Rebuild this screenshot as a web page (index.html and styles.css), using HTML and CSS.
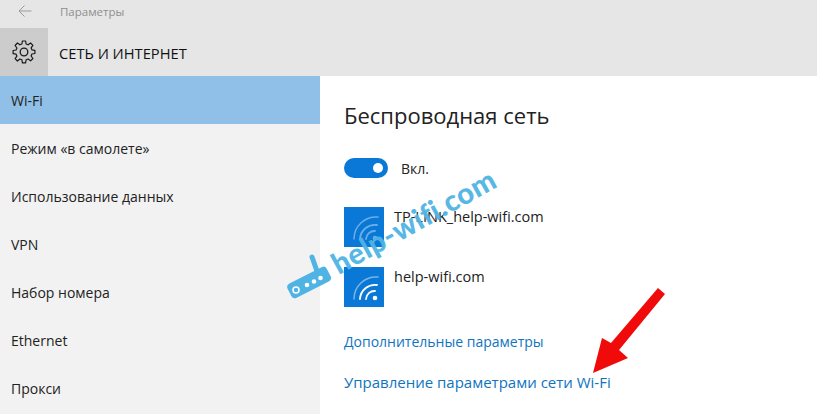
FILE: index.html
```html
<!DOCTYPE html>
<html lang="ru">
<head>
<meta charset="utf-8">
<title>Параметры</title>
<link rel="stylesheet" href="styles.css">
</head>
<body>
<header class="header">
  <div class="topbar">
    <div class="back">
      <svg width="14" height="12" viewBox="0 0 14 12"><path d="M6.500 .5 1 6l5.500 5.500M1 6h12.500" fill="none" stroke="#9a9a9a" stroke-width="1"/></svg>
    </div>
    <span class="app-title">Параметры</span>
  </div>
  <div class="section-bar">
    <div class="gear-box">
      <svg width="24" height="24" viewBox="0 0 24 24"><path d="M10.400 1h3.200l.5 3 2 .8 2.500-1.800 2.300 2.300-1.800 2.500.8 2 3 .5v3.200l-3 .5-.8 2 1.800 2.500-2.300 2.300-2.500-1.800-2 .8-.5 3h-3.200l-.5-3-2-.8L5.400 21l-2.300-2.300 1.800-2.500-.8-2-3-.5v-3.200l3-.5.8-2-1.800-2.500L5.400 3l2.500 1.800 2-.8z" fill="none" stroke="#1a1a1a" stroke-width="1.200" stroke-linejoin="round"/><circle cx="12" cy="12" r="3.800" fill="none" stroke="#1a1a1a" stroke-width="1.300"/></svg>
    </div>
    <h1 class="section-title">СЕТЬ И ИНТЕРНЕТ</h1>
  </div>
</header>
<div class="body">
  <nav class="sidebar">
    <a class="nav-item active">Wi-Fi</a>
    <a class="nav-item">Режим «в самолете»</a>
    <a class="nav-item">Использование данных</a>
    <a class="nav-item">VPN</a>
    <a class="nav-item">Набор номера</a>
    <a class="nav-item">Ethernet</a>
    <a class="nav-item">Прокси</a>
  </nav>
  <main class="content">
    <h2 class="heading">Беспроводная сеть</h2>
    <div class="toggle-row">
      <span class="toggle"><span class="knob"></span></span>
      <span class="toggle-label">Вкл.</span>
    </div>
    <div class="network">
      <span class="tile">
        <svg width="40" height="40" viewBox="0 0 40 40" fill="none" stroke="#fff" stroke-linecap="round">
          <path d="M10 32A22 22 0 0 1 34 10" stroke-opacity=".4" stroke-width="1.500"/>
          <path d="M16 32A15 15 0 0 1 33 18" stroke-opacity=".4" stroke-width="1.800"/>
          <path d="M22 32A8.500 8.500 0 0 1 31 24" stroke-opacity=".4" stroke-width="1.800"/>
          <circle cx="31" cy="31" r="2.300" fill="#fff" fill-opacity=".4" stroke="none"/>
        </svg>
      </span>
      <span class="net-name">TP-LINK_help-wifi.com</span>
    </div>
    <div class="network second">
      <span class="tile">
        <svg width="40" height="40" viewBox="0 0 40 40" fill="none" stroke="#fff" stroke-linecap="round">
          <path d="M10 32A22 22 0 0 1 34 10" stroke-opacity=".45" stroke-width="1.500"/>
          <path d="M16 32A15 15 0 0 1 33 18" stroke-width="1.800"/>
          <path d="M22 32A8.500 8.500 0 0 1 31 24" stroke-width="1.800"/>
          <circle cx="31" cy="31" r="2.300" fill="#fff" stroke="none"/>
        </svg>
      </span>
      <span class="net-name">help-wifi.com</span>
    </div>
    <a class="link first">Дополнительные параметры</a>
    <a class="link">Управление параметрами сети Wi-Fi</a>
  </main>
</div>
<div class="watermark">
  <svg class="router" width="56" height="50" viewBox="0 0 56 50">
    <path d="M26 3l6 17" stroke="#4fb4e4" stroke-width="5" stroke-linecap="round"/>
    <rect x="1" y="20" width="44" height="16" rx="4" transform="rotate(-27 24 28)" fill="#4fb4e4"/>
    <circle cx="10" cy="36" r="3" fill="none" stroke="#fff" stroke-width="1.500"/>
    <circle cx="21" cy="31" r="2.300" fill="#fff"/>
    <circle cx="28" cy="27.500" r="2.300" fill="#fff"/>
    <circle cx="34.500" cy="24" r="2.300" fill="#fff"/>
  </svg>
  <span class="wm-text">help-wifi.com</span>
</div>
<svg class="arrow" width="90" height="100" viewBox="0 0 90 100">
  <path d="M78 3 85 9 39 65 48 73 13 88 22 53 31 58z" fill="#f00a0a"/>
</svg>
</body>
</html>
```
FILE: styles.css
```css
* { box-sizing: border-box; }
html, body { margin: 0; padding: 0; }
body {
  width: 817px;
  height: 414px;
  overflow: hidden;
  position: relative;
  background: #fff;
  font-family: "Open Sans", "Noto Sans", sans-serif;
  color: #1a1a1a;
}
.header { background: #e6e6e6; height: 76px; }
.topbar { height: 28px; display: flex; align-items: center; padding-bottom: 6px; }
.back { width: 60px; padding-left: 18px; display: flex; }
.app-title { font-size: 11.500px; color: #8f8f8f; }
.section-bar { height: 48px; display: flex; align-items: center; }
.gear-box {
  width: 48px;
  height: 48px;
  background: #cccccc;
  display: flex;
  align-items: center;
  justify-content: center;
}
.section-title { margin: 1px 0 0 11px; font-size: 14.700px; font-weight: 500; color: #111; }
.body { display: flex; height: 338px; }
.sidebar { width: 320px; background: #f2f2f2; display: flex; flex-direction: column; }
.nav-item {
  height: 48px;
  display: flex;
  align-items: center;
  padding-left: 11px;
  font-size: 14px;
  color: #222;
}
.nav-item.active { background: #90c0e8; }
.content { flex: 1; padding: 24px 0 0 24px; display: flex; flex-direction: column; align-items: flex-start; }
.heading { margin: 0; font-size: 22px; font-weight: 400; line-height: 30px; color: #222; }
.toggle-row { display: flex; align-items: center; margin-top: 28px; }
.toggle {
  width: 44px;
  height: 20px;
  border-radius: 10px;
  background: #0a78d7;
  display: flex;
  align-items: center;
  justify-content: flex-end;
  padding-right: 5px;
}
.knob { width: 10px; height: 10px; border-radius: 50%; background: #fff; }
.toggle-label { margin-left: 13px; font-size: 14px; color: #222; }
.network { display: flex; align-items: flex-start; margin-top: 29px; }
.network.second { margin-top: 20px; }
.tile { width: 40px; height: 40px; background: #0a78d7; display: block; }
.tile svg { display: block; }
.net-name { margin-left: 10px; font-size: 14.500px; line-height: 20px; color: #222; }
.link { font-size: 15px; line-height: 20px; color: #0f74bf; margin-top: 20px; }
.link.first { margin-top: 25px; font-size: 14px; }
.watermark {
  position: absolute;
  left: 284px;
  top: 166px;
  width: 230px;
  height: 140px;
}
.router { position: absolute; left: 2px; top: 88px; }
.wm-text {
  position: absolute;
  left: 38px;
  top: 37px;
  font-family: "Lato", sans-serif;
  font-weight: 900;
  font-size: 29px;
  line-height: 36px;
  letter-spacing: .4px;
  color: #4fb4e4;
  white-space: nowrap;
  transform: rotate(-29deg);
  opacity: .95;
}
.arrow { position: absolute; left: 580px; top: 285px; }
```
